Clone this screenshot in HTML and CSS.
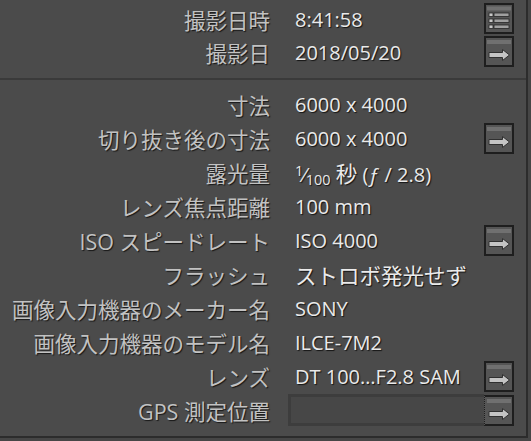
FILE: index.html
```html
<!DOCTYPE html>
<html>
<head>
    <title>メタデータ</title>
    <link rel="stylesheet" href="styles.css">
</head>
<body>

    <div class="panel">
        <div class="group groupTop">
            <div class="row">
                <span class="label">撮影日時</span>
                <span class="value">8:41:58</span>
                <span class="btn">
                    <svg width="26" height="27" viewBox="0 0 26 27">
                        <rect x="1" y="1.5" width="24" height="4" fill="#707070"/>
                        <rect x="3" y="8" width="4" height="3.5" fill="#c8c8c8" stroke="#262626" stroke-width="0.8"/>
                        <rect x="8" y="8" width="15" height="3.5" fill="#a0a0a0" stroke="#262626" stroke-width="0.8"/>
                        <rect x="3" y="14" width="4" height="3.5" fill="#c8c8c8" stroke="#262626" stroke-width="0.8"/>
                        <rect x="8" y="14" width="15" height="3.5" fill="#a0a0a0" stroke="#262626" stroke-width="0.8"/>
                        <rect x="3" y="20" width="4" height="3.5" fill="#c8c8c8" stroke="#262626" stroke-width="0.8"/>
                        <rect x="8" y="20" width="15" height="3.5" fill="#a0a0a0" stroke="#262626" stroke-width="0.8"/>
                    </svg>
                </span>
            </div>
            <div class="row">
                <span class="label">撮影日</span>
                <span class="value">2018/05/20</span>
                <span class="btn">
                    <svg width="26" height="27" viewBox="0 0 26 27">
                        <rect x="1" y="2" width="24" height="4" fill="#707070"/>
                        <path d="M3 14.5 H16.5 V11.5 L23.5 17 L16.5 22.5 V19.5 H3 Z" fill="#c4c4c4" stroke="#303030" stroke-width="1"/>
                    </svg>
                </span>
            </div>
        </div>

        <div class="divider"></div>

        <div class="group groupMain">
            <div class="row">
                <span class="label">寸法</span>
                <span class="value">6000 x 4000</span>
            </div>
            <div class="row">
                <span class="label">切り抜き後の寸法</span>
                <span class="value">6000 x 4000</span>
                <span class="btn">
                    <svg width="26" height="27" viewBox="0 0 26 27">
                        <rect x="1" y="2" width="24" height="4" fill="#707070"/>
                        <path d="M3 14.5 H16.5 V11.5 L23.5 17 L16.5 22.5 V19.5 H3 Z" fill="#c4c4c4" stroke="#303030" stroke-width="1"/>
                    </svg>
                </span>
            </div>
            <div class="row">
                <span class="label">露光量</span>
                <span class="value"><span class="frac"><sup>1</sup>⁄<sub>100</sub></span> <span class="ja">秒</span> (<i>ƒ</i> / 2.8)</span>
            </div>
            <div class="row">
                <span class="label">レンズ焦点距離</span>
                <span class="value">100 mm</span>
            </div>
            <div class="row">
                <span class="label">ISO スピードレート</span>
                <span class="value">ISO 4000</span>
                <span class="btn">
                    <svg width="26" height="27" viewBox="0 0 26 27">
                        <rect x="1" y="2" width="24" height="4" fill="#707070"/>
                        <path d="M3 14.5 H16.5 V11.5 L23.5 17 L16.5 22.5 V19.5 H3 Z" fill="#c4c4c4" stroke="#303030" stroke-width="1"/>
                    </svg>
                </span>
            </div>
            <div class="row">
                <span class="label">フラッシュ</span>
                <span class="value ja">ストロボ発光せず</span>
            </div>
            <div class="row">
                <span class="label">画像入力機器のメーカー名</span>
                <span class="value">SONY</span>
            </div>
            <div class="row">
                <span class="label">画像入力機器のモデル名</span>
                <span class="value">ILCE-7M2</span>
            </div>
            <div class="row">
                <span class="label">レンズ</span>
                <span class="value">DT 100…F2.8 SAM</span>
                <span class="btn">
                    <svg width="26" height="27" viewBox="0 0 26 27">
                        <rect x="1" y="2" width="24" height="4" fill="#707070"/>
                        <path d="M3 14.5 H16.5 V11.5 L23.5 17 L16.5 22.5 V19.5 H3 Z" fill="#c4c4c4" stroke="#303030" stroke-width="1"/>
                    </svg>
                </span>
            </div>
            <div class="row">
                <span class="label">GPS 測定位置</span>
                <span class="field"></span>
                <span class="btn btnDotted">
                    <svg width="26" height="27" viewBox="0 0 26 27">
                        <rect x="1" y="2" width="24" height="4" fill="#707070"/>
                        <path d="M3 14.5 H16.5 V11.5 L23.5 17 L16.5 22.5 V19.5 H3 Z" fill="#c4c4c4" stroke="#303030" stroke-width="1"/>
                    </svg>
                </span>
            </div>
        </div>
    </div>

</body>
</html>
```

FILE: styles.css
```css
body {
    margin: 0;
    background-color: #464646;
    font-family: "Open Sans", "Noto Sans CJK JP", sans-serif;
}
.panel {
    width: 528px;
    height: 438px;
    box-sizing: border-box;
    background-color: #4b4b4b;
    border-right: 2px solid #2c2c2c;
    border-bottom: 2px solid #2c2c2c;
}
.groupTop {
    padding-top: 2px;
    padding-bottom: 10px;
}
.groupTop .row {
    height: 33px;
}
.divider {
    height: 2px;
    background-color: #3a3a3a;
}
.groupMain {
    padding-top: 7px;
}
.row {
    display: grid;
    grid-template-columns: 270px 214px 30px;
    height: 34px;
    align-items: center;
}
.label {
    text-align: right;
    white-space: nowrap;
    font-size: 21.5px;
    color: #c2c2c2;
    text-shadow: 1px 1px 1px rgba(0, 0, 0, 0.7);
    padding-top: 1px;
}
.value {
    padding-left: 25px;
    white-space: nowrap;
    font-size: 20px;
    color: #eaeaea;
    text-shadow: 1px 1px 1px rgba(0, 0, 0, 0.75);
    padding-top: 1px;
}
.ja,
.value.ja {
    font-size: 21.5px;
}
.frac sup,
.frac sub {
    font-size: 0.72em;
    line-height: 0;
}
.frac sup {
    vertical-align: 0.42em;
}
.frac sub {
    vertical-align: -0.22em;
}
.btn {
    width: 30px;
    height: 31px;
    box-sizing: border-box;
    border: 2px solid #1e1e1e;
    background-color: #555555;
    display: flex;
}
.btnDotted {
    border-left: 1px dotted #1e1e1e;
    padding-left: 1px;
}
.field {
    margin-left: 18px;
    height: 32px;
    box-sizing: border-box;
    border: 3px solid #3d3d3d;
    border-right: none;
    background-color: #474747;
}
```
